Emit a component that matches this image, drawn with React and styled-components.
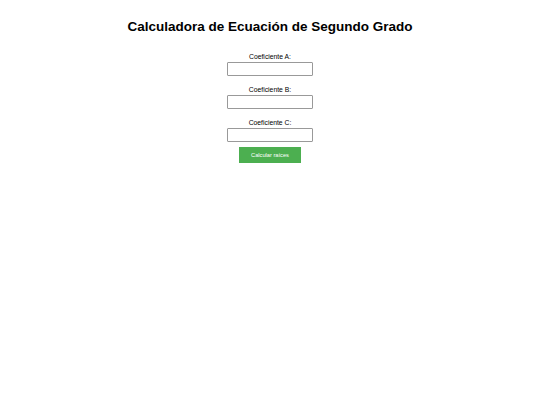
import React, { useState } from 'react';
import styled, { createGlobalStyle } from 'styled-components';

const GlobalStyle = createGlobalStyle`
  body {
    margin: 0;
    background: #fff;
    font-family: "Liberation Sans", Arial, sans-serif;
  }
`;

const Page = styled.div`
  display: flex;
  flex-direction: column;
  align-items: center;
  padding-top: 19px;
`;

const Title = styled.h1`
  margin: 0 0 17.5px;
  font-size: 13.5px;
  font-weight: bold;
  color: #000;
  line-height: 16px;
`;

const Form = styled.form`
  display: flex;
  flex-direction: column;
  align-items: center;
`;

const Field = styled.div`
  display: flex;
  flex-direction: column;
  align-items: center;
  margin-bottom: ${p => (p.last ? '5px' : '10px')};
`;

const Label = styled.label`
  font-size: 6.8px;
  line-height: 8px;
  color: #000;
  margin-bottom: 1px;
`;

const Input = styled.input`
  box-sizing: border-box;
  width: 86px;
  height: 14px;
  border: 1px solid #999;
  border-radius: 1px;
  padding: 0 2px;
  font-size: 7px;
  outline: none;
`;

const Button = styled.button`
  width: 62px;
  height: 16px;
  border: none;
  background: #4caf50;
  color: #fff;
  font-family: "Liberation Sans", Arial, sans-serif;
  font-size: 5.7px;
  cursor: pointer;
  padding: 0;
`;

const App = () => {
  const [a, setA] = useState('');
  const [b, setB] = useState('');
  const [c, setC] = useState('');

  const calcular = e => {
    e.preventDefault();
  };

  return (
    <Page>
      <GlobalStyle />
      <Title>Calculadora de Ecuación de Segundo Grado</Title>
      <Form onSubmit={calcular}>
        <Field>
          <Label htmlFor="a">Coeficiente A:</Label>
          <Input id="a" type="number" value={a} onChange={e => setA(e.target.value)} />
        </Field>
        <Field>
          <Label htmlFor="b">Coeficiente B:</Label>
          <Input id="b" type="number" value={b} onChange={e => setB(e.target.value)} />
        </Field>
        <Field last>
          <Label htmlFor="c">Coeficiente C:</Label>
          <Input id="c" type="number" value={c} onChange={e => setC(e.target.value)} />
        </Field>
        <Button type="submit">Calcular raíces</Button>
      </Form>
    </Page>
  );
};

export default App;
